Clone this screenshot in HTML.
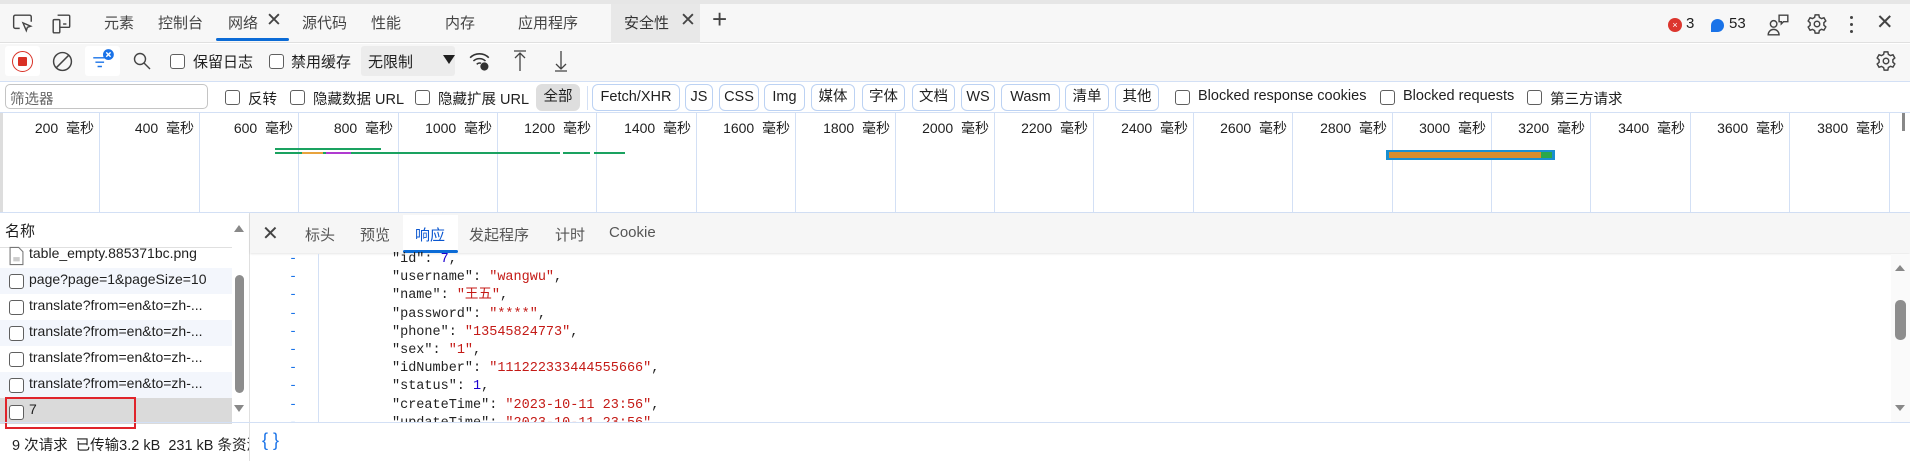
<!DOCTYPE html>
<html><head><meta charset="utf-8"><style>
*{box-sizing:border-box;margin:0;padding:0}
body{width:1910px;height:461px;overflow:hidden;background:#fff;font-family:"Liberation Sans","Noto Sans CJK SC",sans-serif;font-size:13px;color:#1f1f1f;position:relative}
.a{position:absolute;white-space:nowrap}
.cb{position:absolute;width:15px;height:15px;border:1px solid #5f5f5f;border-radius:3px;background:#fff}
.btn{position:absolute;top:84px;height:27px;border:1px solid #bcd2f3;border-radius:6px;font-size:14.5px;line-height:25px;text-align:center;color:#1f1f1f}
.tl{position:absolute;top:118px;font-size:14px;color:#1f1f1f;text-align:right;width:90px}
.dv{position:absolute;top:112px;height:101px;width:1px;background:#d3e0f5}
.row{position:absolute;left:0;width:232px;height:26px}
.t15{font-size:15px;color:#444}
.code{font-family:"Liberation Mono","Noto Sans CJK SC",monospace;font-size:13.5px;line-height:18px;color:#222}
.s{color:#c41a16}.n{color:#1c00cf}
</style></head><body>
<div class="a" style="left:0;top:0;width:1910px;height:4px;background:#e6e6e6"></div>
<div class="a" style="left:0;top:4px;width:1910px;height:39px;background:#f7f7f7;border-bottom:1px solid #e0e0e0"></div>
<svg class="a" style="left:12px;top:14px" width="22" height="20" viewBox="0 0 20 18" fill="none" stroke="#444" stroke-width="1.3"><path d="M7 13H3a1.5 1.5 0 0 1-1.5-1.5v-9A1.5 1.5 0 0 1 3 1h13a1.5 1.5 0 0 1 1.5 1.5V7"/><path d="M10 8l7 3-3 1-1 3z"/></svg>
<svg class="a" style="left:51px;top:13px" width="22" height="22" viewBox="0 0 20 20" fill="none" stroke="#444" stroke-width="1.3"><rect x="2" y="6" width="6" height="12" rx="1"/><path d="M6 2h10a1 1 0 0 1 1 1v9a1 1 0 0 1-1 1H8"/><path d="M11 10h3"/></svg>
<div class="a t15" style="left:104px;top:12px">元素</div>
<div class="a t15" style="left:158px;top:12px">控制台</div>
<div class="a t15" style="left:228px;top:12px">网络</div>
<div class="a" style="left:266px;top:9px;font-size:19px;color:#444">✕</div>
<div class="a" style="left:216px;top:38px;width:73px;height:3px;background:#0b6bd6;border-radius:2px"></div>
<div class="a t15" style="left:302px;top:12px">源代码</div>
<div class="a t15" style="left:371px;top:12px">性能</div>
<div class="a t15" style="left:445px;top:12px">内存</div>
<div class="a t15" style="left:518px;top:12px">应用程序</div>
<div class="a" style="left:611px;top:4px;width:89px;height:39px;background:#e8e8e8"></div>
<div class="a t15" style="left:624px;top:12px;color:#333">安全性</div>
<div class="a" style="left:680px;top:9px;font-size:19px;color:#444">✕</div>
<div class="a" style="left:712px;top:4px;font-size:26px;color:#444">+</div>
<div class="a" style="left:1668px;top:18px;width:14px;height:14px;border-radius:50%;background:#dc362e;color:#fff;font-size:9px;line-height:14px;text-align:center">×</div>
<div class="a" style="left:1686px;top:15px;font-size:15px">3</div>
<div class="a" style="left:1711px;top:19px;width:13px;height:13px;border-radius:50% 50% 50% 0;background:#1a73e8"></div>
<div class="a" style="left:1729px;top:15px;font-size:15px">53</div>
<svg class="a" style="left:1766px;top:13px" width="24" height="24" viewBox="0 0 22 22" fill="none" stroke="#444" stroke-width="1.3"><circle cx="7" cy="10" r="3"/><path d="M2 20a5 5 0 0 1 10 0z"/><path d="M12 2h8v6h-4l-2 2V8h-2z"/></svg>
<svg class="a" style="left:1806px;top:13px" width="22" height="22" viewBox="0 0 24 24" fill="none" stroke="#444" stroke-width="1.6"><circle cx="12" cy="12" r="3"/><path d="M10 2h4l.6 2.8 2.3 1.3 2.7-.9 2 3.5-2.1 1.9v2.7l2.1 1.9-2 3.5-2.7-.9-2.3 1.3L14 22h-4l-.6-2.8-2.3-1.3-2.7.9-2-3.5 2.1-1.9v-2.7L2.4 8.7l2-3.5 2.7.9 2.3-1.3z"/></svg>
<div class="a" style="left:1850px;top:16px;width:3px;height:3px;border-radius:50%;background:#444;box-shadow:0 7px 0 #444,0 14px 0 #444"></div>
<div class="a" style="left:1876px;top:10px;font-size:21px;color:#444">✕</div>
<!-- toolbar -->
<div class="a" style="left:0;top:44px;width:1910px;height:38px;background:#f7f7f7;border-bottom:1px solid #d3e0f5"></div>
<div class="a" style="left:5px;top:46px;width:35px;height:30px;background:#fff;border-radius:3px"></div>
<div class="a" style="left:12px;top:51px;width:21px;height:21px;border:1.5px solid #d93025;border-radius:50%"></div>
<div class="a" style="left:18px;top:57px;width:9px;height:9px;background:#d93025;border-radius:1px"></div>
<svg class="a" style="left:52px;top:51px" width="21" height="21" viewBox="0 0 20 20" fill="none" stroke="#444" stroke-width="1.4"><circle cx="10" cy="10" r="8.5"/><path d="M4 16L16 4"/></svg>
<div class="a" style="left:85px;top:46px;width:35px;height:30px;background:#fff;border-radius:3px"></div>
<svg class="a" style="left:90px;top:48px" width="26" height="24" viewBox="0 0 24 22" fill="none" stroke="#1a73e8" stroke-width="1.3"><path d="M3 9h11M5 13h8M7 17h4"/><circle cx="17" cy="6" r="5" fill="#1a73e8" stroke="none"/><path d="M15 4l4 4M19 4l-4 4" stroke="#fff"/></svg>
<svg class="a" style="left:133px;top:52px" width="18" height="18" viewBox="0 0 18 18" fill="none" stroke="#444" stroke-width="1.4"><circle cx="7" cy="7" r="5.5"/><path d="M11 11l6 6"/></svg>
<div class="cb" style="left:170px;top:54px"></div>
<div class="a" style="left:193px;top:51px;font-size:15px">保留日志</div>
<div class="cb" style="left:269px;top:54px"></div>
<div class="a" style="left:291px;top:51px;font-size:15px">禁用缓存</div>
<div class="a" style="left:361px;top:46px;width:94px;height:30px;background:#ececec;border-radius:3px"></div>
<div class="a" style="left:368px;top:51px;font-size:15px">无限制</div>
<div class="a" style="left:443px;top:55px;width:0;height:0;border-left:6px solid transparent;border-right:6px solid transparent;border-top:9px solid #1f1f1f"></div>
<svg class="a" style="left:469px;top:50px" width="22" height="22" viewBox="0 0 20 20" fill="none" stroke="#333" stroke-width="1.4"><path d="M1 7a12 12 0 0 1 17 0M4 10a8 8 0 0 1 11 0M7 13a4 4 0 0 1 4-1"/><circle cx="14" cy="15" r="3" fill="#333"/></svg>
<svg class="a" style="left:512px;top:48px" width="16" height="26" viewBox="0 0 16 24" fill="none" stroke="#444" stroke-width="1.3"><path d="M2 2h12M8 4v18M3 9l5-5 5 5"/></svg>
<svg class="a" style="left:553px;top:48px" width="16" height="26" viewBox="0 0 16 24" fill="none" stroke="#444" stroke-width="1.3"><path d="M2 22h12M8 2v18M3 15l5 5 5-5"/></svg>
<svg class="a" style="left:1875px;top:50px" width="22" height="22" viewBox="0 0 24 24" fill="none" stroke="#444" stroke-width="1.6"><circle cx="12" cy="12" r="3"/><path d="M10 2h4l.6 2.8 2.3 1.3 2.7-.9 2 3.5-2.1 1.9v2.7l2.1 1.9-2 3.5-2.7-.9-2.3 1.3L14 22h-4l-.6-2.8-2.3-1.3-2.7.9-2-3.5 2.1-1.9v-2.7L2.4 8.7l2-3.5 2.7.9 2.3-1.3z"/></svg>
<!-- filter row -->
<div class="a" style="left:0;top:82px;width:1910px;height:31px;background:#fff;border-bottom:1px solid #d3e0f5"></div>
<div class="a" style="left:5px;top:84px;width:203px;height:25px;border:1px solid #c4c4c4;border-radius:5px"></div>
<div class="a" style="left:10px;top:88px;font-size:14.5px;color:#666">筛选器</div>
<div class="cb" style="left:225px;top:90px"></div><div class="a" style="left:248px;top:88px;font-size:14.5px">反转</div>
<div class="cb" style="left:290px;top:90px"></div><div class="a" style="left:313px;top:88px;font-size:14.5px">隐藏数据 URL</div>
<div class="cb" style="left:415px;top:90px"></div><div class="a" style="left:438px;top:88px;font-size:14.5px">隐藏扩展 URL</div>
<div class="btn" style="left:536px;width:44px;background:#dedede;border-color:#dedede">全部</div>
<div class="a" style="left:587px;top:86px;width:1px;height:24px;background:#d3e0f5"></div>
<div class="btn" style="left:592px;width:88px">Fetch/XHR</div>
<div class="btn" style="left:685px;width:28px">JS</div>
<div class="btn" style="left:719px;width:40px">CSS</div>
<div class="btn" style="left:764px;width:41px">Img</div>
<div class="btn" style="left:811px;width:44px">媒体</div>
<div class="btn" style="left:862px;width:43px">字体</div>
<div class="btn" style="left:912px;width:43px">文档</div>
<div class="btn" style="left:961px;width:34px">WS</div>
<div class="btn" style="left:1001px;width:59px">Wasm</div>
<div class="btn" style="left:1065px;width:44px">清单</div>
<div class="btn" style="left:1115px;width:44px">其他</div>
<div class="cb" style="left:1175px;top:90px"></div><div class="a" style="left:1198px;top:88px;font-size:14.5px">Blocked response cookies</div>
<div class="cb" style="left:1380px;top:90px"></div><div class="a" style="left:1403px;top:88px;font-size:14.5px">Blocked requests</div>
<div class="cb" style="left:1527px;top:90px"></div><div class="a" style="left:1550px;top:88px;font-size:14.5px">第三方请求</div>
<!-- timeline -->
<div class="a" style="left:0;top:113px;width:3px;height:100px;background:#ddd"></div>
<div class="a" style="left:0;top:212px;width:1910px;height:1px;background:#d3e0f5"></div>
<div id="tl"></div>
<div class="a" style="left:1902px;top:113px;width:3px;height:18px;background:#888"></div>
<div class="a" style="left:275px;top:148px;width:106px;height:2px;background:#1aa260"></div>
<div class="a" style="left:275px;top:152px;width:285px;height:2px;background:#1aa260"></div>
<div class="a" style="left:563px;top:152px;width:27px;height:2px;background:#1aa260"></div>
<div class="a" style="left:594px;top:152px;width:31px;height:2px;background:#1aa260"></div>
<div class="a" style="left:302px;top:152px;width:21px;height:2px;background:#e8a33d"></div>
<div class="a" style="left:326px;top:152px;width:25px;height:2px;background:#b03ad0"></div>
<div class="a" style="left:1386px;top:150px;width:169px;height:10px;background:#1a8fd0"></div>
<div class="a" style="left:1389px;top:152px;width:152px;height:6px;background:#d98d2c"></div>
<div class="a" style="left:1541px;top:152px;width:11px;height:6px;background:#2aa84a"></div>
<!-- left panel -->
<div class="a" style="left:5px;top:220px;font-size:15px">名称</div>
<div class="a" style="left:0;top:247px;width:232px;height:1px;background:#e0e0e0"></div>
<svg class="a" style="left:9px;top:246px" width="15" height="20" viewBox="0 0 14 18" fill="none" stroke="#777"><path d="M1 1h8l4 4v12H1z"/><rect x="4" y="10" width="6" height="4" fill="#ccc" stroke="none"/></svg>
<div class="a" style="left:29px;top:245px;font-size:14px">table_empty.885371bc.png</div>
<div class="row" style="top:268px;background:#f3f6fc"></div>
<div class="row" style="top:320px;background:#f3f6fc"></div>
<div class="row" style="top:372px;background:#f3f6fc"></div>
<div class="row" style="top:398px;background:#dadada"></div>
<div class="cb" style="left:9px;top:274px"></div><div class="a" style="left:29px;top:271px;font-size:14px">page?page=1&amp;pageSize=10</div>
<div class="cb" style="left:9px;top:300px"></div><div class="a" style="left:29px;top:297px;font-size:14px">translate?from=en&amp;to=zh-...</div>
<div class="cb" style="left:9px;top:326px"></div><div class="a" style="left:29px;top:323px;font-size:14px">translate?from=en&amp;to=zh-...</div>
<div class="cb" style="left:9px;top:352px"></div><div class="a" style="left:29px;top:349px;font-size:14px">translate?from=en&amp;to=zh-...</div>
<div class="cb" style="left:9px;top:378px"></div><div class="a" style="left:29px;top:375px;font-size:14px">translate?from=en&amp;to=zh-...</div>
<div class="cb" style="left:9px;top:405px"></div><div class="a" style="left:29px;top:401px;font-size:14px">7</div>
<div class="a" style="left:5px;top:397px;width:131px;height:32px;border:2px solid #e0242b"></div>
<div class="a" style="left:234px;top:225px;width:0;height:0;border-left:5px solid transparent;border-right:5px solid transparent;border-bottom:7px solid #888"></div>
<div class="a" style="left:235px;top:275px;width:9px;height:118px;background:#8d8d8d;border-radius:5px"></div>
<div class="a" style="left:234px;top:405px;width:0;height:0;border-left:5px solid transparent;border-right:5px solid transparent;border-top:7px solid #888"></div>
<div class="a" style="left:249px;top:213px;width:1px;height:248px;background:#e0e0e0"></div>
<div class="a" style="left:0;top:422px;width:1910px;height:1px;background:#d3e0f5"></div>
<div class="a" style="left:12px;top:434px;font-size:14.5px;width:237px;overflow:hidden">9 次请求&nbsp; 已传输3.2 kB&nbsp; 231 kB 条资源</div>
<div class="a" style="left:262px;top:430px;font-size:18px;color:#1a73e8">{ }</div>
<!-- detail tabs -->
<div class="a" style="left:250px;top:213px;width:1660px;height:40px;background:#f6f6f6;box-shadow:0 1px 2px rgba(0,0,0,.1)"></div>
<div class="a" style="left:262px;top:221px;font-size:20px;color:#444">✕</div>
<div class="a" style="left:305px;top:224px;font-size:15px;color:#555">标头</div>
<div class="a" style="left:360px;top:224px;font-size:15px;color:#555">预览</div>
<div class="a" style="left:403px;top:215px;width:55px;height:38px;background:#fff"></div>
<div class="a" style="left:415px;top:224px;font-size:15px;color:#0b57d0">响应</div>
<div class="a" style="left:403px;top:250px;width:55px;height:3px;background:#0b6bd6;border-radius:2px"></div>
<div class="a" style="left:469px;top:224px;font-size:15px;color:#555">发起程序</div>
<div class="a" style="left:555px;top:224px;font-size:15px;color:#555">计时</div>
<div class="a" style="left:609px;top:224px;font-size:15px;color:#555">Cookie</div>
<div class="a" style="left:318px;top:254px;width:1px;height:168px;background:#d3e0f5"></div>
<div id="code" class="a code" style="left:0;top:0;width:1890px;height:422px;overflow:hidden"></div>
<div class="a" style="left:1891px;top:254px;width:19px;height:168px;background:#fafafa"></div>
<div class="a" style="left:1895px;top:265px;width:0;height:0;border-left:5px solid transparent;border-right:5px solid transparent;border-bottom:6px solid #888"></div>
<div class="a" style="left:1895px;top:300px;width:11px;height:40px;background:#8d8d8d;border-radius:5px"></div>
<div class="a" style="left:1895px;top:405px;width:0;height:0;border-left:5px solid transparent;border-right:5px solid transparent;border-top:6px solid #888"></div>
<script>
var h='';
for(var k=1;k<=19;k++){var x=Math.round(99.4*k);h+='<div class="dv" style="left:'+x+'px"></div><div class="tl" style="left:'+(x-95)+'px">'+(200*k)+'&nbsp; 毫秒</div>';}
document.getElementById('tl').innerHTML=h;
var L=['"id": <span class="n">7</span>,','"username": <span class="s">"wangwu"</span>,','"name": <span class="s">"王五"</span>,','"password": <span class="s">"****"</span>,','"phone": <span class="s">"13545824773"</span>,','"sex": <span class="s">"1"</span>,','"idNumber": <span class="s">"111222333444555666"</span>,','"status": <span class="n">1</span>,','"createTime": <span class="s">"2023-10-11 23:56"</span>,','"updateTime": <span class="s">"2023-10-11 23:56"</span>,'];
var c='';
for(var i=0;i<L.length;i++){var y=251+18.2*i;c+='<div class="a" style="left:289px;top:'+y+'px;height:18px;color:#1a73e8">-</div><div class="a" style="left:392px;top:'+y+'px;height:18px">'+L[i]+'</div>';}
document.getElementById('code').innerHTML=c;
</script>
</body></html>
